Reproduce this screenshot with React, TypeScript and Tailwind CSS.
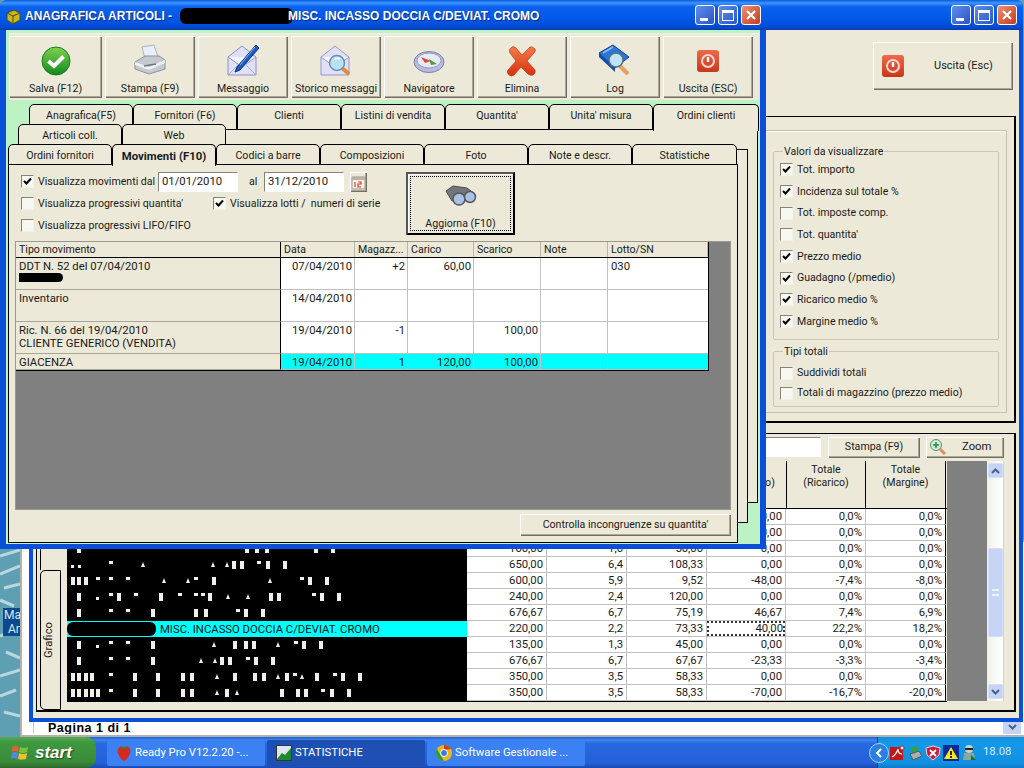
import React from "react";

const raised =
  "bg-[#ece9d8] shadow-[inset_1px_1px_0_#ffffff,inset_-1px_-1px_0_#716f64,inset_-2px_-2px_0_#aca899]";
const titleGradient =
  "bg-[linear-gradient(180deg,#0a5ce0_0%,#3f95ff_10%,#0a62ee_22%,#0055e5_70%,#0349cf_92%,#0a3aa8_100%)]";

const Check = ({ checked = false }: { checked?: boolean }) => (
  <span className="flex h-[13px] w-[13px] shrink-0 items-center justify-center border border-b-[#f4f3ea] border-l-[#85847a] border-r-[#f4f3ea] border-t-[#85847a] bg-[#f8f8f2]">
    {checked && (
      <svg width="9" height="9" viewBox="0 0 9 9">
        <path d="M1 4 L3.5 6.5 L8 1.5" fill="none" stroke="#000" strokeWidth="2" />
      </svg>
    )}
  </span>
);

const CheckRow = ({ label, checked, className }: { label: string; checked?: boolean; className?: string }) => (
  <div className={`flex items-center gap-[4px] ${className || ""}`}>
    <Check checked={checked} />
    <span className="whitespace-pre">{label}</span>
  </div>
);

const WinButtons = () => (
  <div className="flex items-center gap-[3px]">
    <span className="flex h-[20px] w-[20px] items-end rounded-[3px] border border-white bg-[linear-gradient(135deg,#5f8dea,#2a56c8)] pb-[3px] pl-[4px]">
      <span className="h-[3px] w-[8px] bg-white" />
    </span>
    <span className="flex h-[20px] w-[20px] items-center justify-center rounded-[3px] border border-white bg-[linear-gradient(135deg,#5f8dea,#2a56c8)]">
      <span className="h-[11px] w-[12px] border border-t-[3px] border-white" />
    </span>
    <span className="flex h-[20px] w-[20px] items-center justify-center rounded-[3px] border border-white bg-[linear-gradient(135deg,#ea9277,#c8391a)]">
      <svg width="12" height="12" viewBox="0 0 12 12">
        <path d="M2 2 L10 10 M10 2 L2 10" stroke="#fff" strokeWidth="2.2" />
      </svg>
    </span>
  </div>
);

const IconSave = () => (
  <svg width="36" height="36" viewBox="0 0 36 36">
    <defs>
      <linearGradient id="sv" x1="0" y1="0" x2="0" y2="1">
        <stop offset="0" stopColor="#7fd24f" />
        <stop offset="1" stopColor="#0f8a1e" />
      </linearGradient>
    </defs>
    <circle cx="18" cy="18" r="14" fill="url(#sv)" stroke="#1b7a22" />
    <path d="M10.5 18 L16 23 L25.5 13.5" fill="none" stroke="#fff" strokeWidth="4" />
  </svg>
);

const IconPrint = () => (
  <svg width="36" height="36" viewBox="0 0 36 36">
    <path d="M10 4 L22 2 L26 14 L13 16 Z" fill="#e8f1fa" stroke="#a8b4c2" />
    <path d="M3 19 L13 13 L27 13 L33 17 L33 26 L17 31 L3 26 Z" fill="#c6c9cf" stroke="#8d9199" />
    <path d="M3 19 L17 24 L33 17 L33 20 L17 27 L3 22 Z" fill="#eef0f3" />
    <path d="M12 23 L24 21" stroke="#72767d" strokeWidth="1.5" />
  </svg>
);

const IconMail = () => (
  <svg width="36" height="36" viewBox="0 0 36 36">
    <path d="M3 14 L17 3 L31 14 L31 32 L3 32 Z" fill="#dfe0f7" stroke="#8f8fc8" />
    <path d="M3 14 L17 24 L31 14" fill="#f7f7ff" stroke="#8f8fc8" />
    <path d="M3 32 L14 21 M31 32 L20 21" stroke="#a9a9d8" />
    <path d="M31 2 L34 5 L15 27 L10 29 L12 24 Z" fill="#1c5bc2" stroke="#0f2f78" />
    <path d="M30 4 L15 22" stroke="#8ab7f5" />
  </svg>
);

const IconMailSearch = () => (
  <svg width="36" height="36" viewBox="0 0 36 36">
    <path d="M3 14 L17 3 L31 14 L31 32 L3 32 Z" fill="#dfe0f7" stroke="#9797cc" />
    <path d="M3 14 L17 24 L31 14" fill="#f7f7ff" stroke="#9797cc" />
    <path d="M24 25 L31 31" stroke="#e58a3c" strokeWidth="4" />
    <circle cx="19" cy="20" r="7.5" fill="#b6e2f7" stroke="#6f8da8" strokeWidth="1.5" />
    <path d="M15 18 Q18 14 22 16" stroke="#fff" strokeWidth="1.5" fill="none" />
  </svg>
);

const IconNav = () => (
  <svg width="36" height="36" viewBox="0 0 36 36">
    <ellipse cx="18" cy="19" rx="15" ry="10.5" fill="#b8bce0" stroke="#7d80a8" />
    <ellipse cx="18" cy="17.5" rx="12" ry="7.5" fill="#eaeaf2" stroke="#9497b8" />
    <path d="M10 14 L20 18 L14 20 Z" fill="#d84c3c" />
    <path d="M26 21 L18 16 L20 22 Z" fill="#4c9a4c" />
  </svg>
);

const IconDelete = () => (
  <svg width="36" height="36" viewBox="0 0 36 36">
    <defs>
      <linearGradient id="dl" x1="0" y1="0" x2="0" y2="1">
        <stop offset="0" stopColor="#f47a4a" />
        <stop offset="1" stopColor="#d8300e" />
      </linearGradient>
    </defs>
    <path
      d="M8 4 Q10 3 12 5 L18 12 L26 4 Q28 3 31 6 Q32 8 30 10 L23 18 L31 27 Q32 30 29 32 Q26 33 24 31 L17 24 L10 32 Q7 34 5 32 Q2 29 4 27 L12 18 L6 10 Q4 6 8 4 Z"
      fill="url(#dl)"
      stroke="#b23a1a"
      strokeWidth="0.7"
    />
  </svg>
);

const IconLog = () => (
  <svg width="36" height="36" viewBox="0 0 36 36">
    <path d="M2 10 L16 2 L32 14 L18 25 Z" fill="#2a76d8" stroke="#0f3f8c" />
    <path d="M2 10 L18 25 L18 29 L2 14 Z" fill="#0f4fa8" />
    <path d="M6 10 L16 4" stroke="#8cc0f5" strokeWidth="1.5" />
    <path d="M23 23 L31 31" stroke="#e8a060" strokeWidth="4" />
    <circle cx="19" cy="17" r="7" fill="#bfe4f7" stroke="#5d6f80" strokeWidth="1.5" />
  </svg>
);

const IconPower = ({ size = 24 }: { size?: number }) => (
  <svg width={size} height={size} viewBox="0 0 24 24">
    <defs>
      <linearGradient id={`pw${size}`} x1="0" y1="0" x2="0" y2="1">
        <stop offset="0" stopColor="#ee6a4a" />
        <stop offset="1" stopColor="#c8361c" />
      </linearGradient>
    </defs>
    <rect x="1" y="1" width="22" height="22" rx="3" fill={`url(#pw${size})`} />
    <circle cx="12" cy="12" r="6" fill="none" stroke="#f8d8d0" strokeWidth="2" />
    <path d="M12 8 L12 13" stroke="#fff" strokeWidth="2.4" />
  </svg>
);

const IconBinoculars = () => (
  <svg width="32" height="22" viewBox="0 0 32 22">
    <path d="M1 6 L8 1 L22 3 L30 9 L24 16 L12 13 L7 16 Z" fill="#74757a" stroke="#4c4d52" />
    <circle cx="14" cy="14" r="6" fill="#a8c4e4" stroke="#55565a" strokeWidth="1.5" />
    <circle cx="25" cy="12" r="5.5" fill="#a8c4e4" stroke="#55565a" strokeWidth="1.5" />
  </svg>
);

const IconCalendar = () => (
  <svg width="15" height="15" viewBox="0 0 15 15">
    <rect x="1" y="2" width="13" height="12" fill="#f8f4ec" stroke="#9a9488" />
    <rect x="1" y="2" width="13" height="3" fill="#b8b0a4" />
    <path d="M4 7 L4 12 M7 7 L10 7 L10 9 L7 9 L7 12 L10 12" stroke="#d83c20" fill="none" strokeWidth="1.2" />
  </svg>
);

const IconZoom = () => (
  <svg width="18" height="18" viewBox="0 0 18 18">
    <path d="M11 11 L16 16" stroke="#e0905a" strokeWidth="3" />
    <circle cx="7" cy="7" r="5.5" fill="#c8ecd8" stroke="#6a8a78" />
    <path d="M7 4 L7 10 M4 7 L10 7" stroke="#2a8a3c" strokeWidth="1.5" />
  </svg>
);

const Arrow = ({ up }: { up?: boolean }) => (
  <svg width="9" height="6" viewBox="0 0 9 6">
    <path d={up ? "M1 5 L4.5 1.5 L8 5" : "M1 1 L4.5 4.5 L8 1"} fill="none" stroke="#4d6185" strokeWidth="2" />
  </svg>
);

const ScrollBtn = ({ up }: { up?: boolean }) => (
  <div className="flex h-[15px] w-[15px] items-center justify-center rounded-[2px] border border-[#d4def6] bg-[#c4d4f6]">
    <Arrow up={up} />
  </div>
);

const toolbar = [
  { label: "Salva (F12)", icon: <IconSave />, w: "w-[93px]" },
  { label: "Stampa (F9)", icon: <IconPrint />, w: "w-[90px]" },
  { label: "Messaggio", icon: <IconMail />, w: "w-[90px]" },
  { label: "Storico messaggi", icon: <IconMailSearch />, w: "w-[90px]" },
  { label: "Navigatore", icon: <IconNav />, w: "w-[90px]" },
  { label: "Elimina", icon: <IconDelete />, w: "w-[90px]" },
  { label: "Log", icon: <IconLog />, w: "w-[90px]" },
  { label: "Uscita (ESC)", icon: <IconPower />, w: "w-[90px]" },
];

const Tab = ({ label, active, bold, w = "w-[104px]" }: { label: string; active?: boolean; bold?: boolean; w?: string }) => (
  <div
    className={`${w} relative shrink-0 rounded-t-[5px] border border-black pt-[3px] text-center ${
      active ? "z-10 -mb-px border-b-0 bg-[#ece9d8]" : "bg-[#ece9d8]"
    } ${bold ? "text-[11.4px] font-bold" : ""}`}
  >
    {label}
  </div>
);

const moveCols = "grid grid-cols-[265px_74px_53px_66px_67px_67px_100px]";

const moves = [
  { h: "h-[32px]", tipo: ["DDT N. 52 del 07/04/2010"], scribble: true, data: "07/04/2010", mag: "+2", car: "60,00", sca: "", lot: "030" },
  { h: "h-[32px]", tipo: ["Inventario"], data: "14/04/2010", mag: "", car: "", sca: "", lot: "" },
  { h: "h-[32px]", tipo: ["Ric. N. 66 del 19/04/2010", "CLIENTE GENERICO (VENDITA)"], data: "19/04/2010", mag: "-1", car: "", sca: "100,00", lot: "" },
  { h: "h-[16px]", tipo: ["GIACENZA"], data: "19/04/2010", mag: "1", car: "120,00", sca: "100,00", lot: "", cyan: true },
];

const MoveTable = () => (
  <div className="h-[269px] w-[716px] border border-[#9a988c] bg-[#808080]">
    <div className="w-[693px] border-b border-r border-black">
      <div className={`${moveCols} h-[16px] border-b border-black bg-[#ece9d8] leading-[15px]`}>
        {["Tipo movimento", "Data", "Magazz...", "Carico", "Scarico", "Note", "Lotto/SN"].map((t, i) => (
          <div key={t} className={`pl-[3px] ${i === 0 ? "border-r border-black" : "border-r border-[#b8b6aa]"}`}>
            {t}
          </div>
        ))}
      </div>
      {moves.map((m, i) => {
        const bg = m.cyan ? "bg-[#00ffff]" : "bg-white";
        const cell = `${bg} border-r border-b border-[#c0c0c0] pr-[2px] text-right`;
        return (
          <div key={i} className={`${moveCols} ${m.h} text-[11.3px] leading-[13px]`}>
            <div className="relative border-b border-r border-b-[#a8a69a] border-r-black bg-[#ece9d8] pl-[3px] pt-[2px]">
              {m.tipo.map((t) => (
                <div key={t}>{t}</div>
              ))}
              {m.scribble && <div className="h-[9px] w-[44px] rounded-r-full bg-black" />}
            </div>
            <div className={`${cell} pt-[2px]`}>{m.data}</div>
            <div className={`${cell} pt-[2px]`}>{m.mag}</div>
            <div className={`${cell} pt-[2px]`}>{m.car}</div>
            <div className={`${cell} pt-[2px]`}>{m.sca}</div>
            <div className={cell} />
            <div className={`${bg} border-b border-[#c0c0c0] pl-[3px] pt-[2px]`}>{m.lot}</div>
          </div>
        );
      })}
    </div>
  </div>
);

const FrontWindow = () => (
  <div className="absolute left-0 top-0 flex h-[549px] w-[766px] flex-col rounded-t-[7px] bg-[#0a4fd8]">
    <div className={`flex h-[30px] shrink-0 items-center justify-between rounded-t-[7px] pl-[5px] pr-[5px] ${titleGradient}`}>
      <div className="flex items-center gap-[3px] pt-[2px] text-[12px] font-bold text-white [font-family:'Liberation_Sans',Arial,sans-serif] [text-shadow:1px_1px_0_#0a2a80]">
        <svg width="17" height="17" viewBox="0 0 17 17">
          <path d="M2 5 L9 2 L15 5 L15 12 L8 16 L2 12 Z" fill="#c8b818" stroke="#4a4a20" />
          <path d="M2 5 L8 8 L15 5 M8 8 L8 16" stroke="#4a4a20" fill="none" />
        </svg>
        <span>ANAGRAFICA ARTICOLI - </span>
        <span className="-mr-[8px] ml-[5px] h-[16px] w-[113px] rounded-[6px] bg-black" />
        <span>MISC. INCASSO DOCCIA C/DEVIAT. CROMO</span>
      </div>
      <WinButtons />
    </div>
    <div className="mx-[6px] mb-[5px] flex-1 bg-[#bcf2c4] pt-[3px]">
      <div className="ml-[3px] flex h-[67px] w-[750px] gap-[3px] border-t border-[#f4f3ea] bg-[#ece9d8] pt-[2px]">
        {toolbar.map((b) => (
          <div key={b.label} className={`${raised} ${b.w} flex h-[62px] flex-col items-center justify-between pb-[3px] pt-[6px]`}>
            <div className="flex h-[38px] items-center">{b.icon}</div>
            <div className="whitespace-nowrap leading-[13px]">{b.label}</div>
          </div>
        ))}
      </div>
      <div className="ml-[2px] mt-[4px] grid">
        <div className="col-start-1 row-start-1 ml-[21px] w-[729px]">
          <div className="flex h-[26px]">
            {["Anagrafica(F5)", "Fornitori (F6)", "Clienti", "Listini di vendita", "Quantita'", "Unita' misura"].map((t) => (
              <Tab key={t} label={t} />
            ))}
            <Tab label="Ordini clienti" active w="w-[106px]" />
          </div>
          <div className="-mt-px h-[374px] border border-l-0 border-black bg-[#ece9d8]" />
        </div>
        <div className="col-start-1 row-start-1 ml-[10px] mt-[20px] w-[730px]">
          <div className="flex h-[26px]">
            <Tab label="Articoli coll." />
            <Tab label="Web" />
          </div>
          <div className="-mt-px h-[374px] border border-l-0 border-black bg-[#ece9d8]" />
        </div>
        <div className="col-start-1 row-start-1 mt-[40px] w-[730px]">
          <div className="flex h-[21px]">
            <Tab label="Ordini fornitori" />
            <Tab label="Movimenti (F10)" bold active />
            <Tab label="Codici a barre" />
            <Tab label="Composizioni" />
            <Tab label="Foto" />
            <Tab label="Note e descr." />
            <Tab label="Statistiche" w="w-[105px]" />
          </div>
          <div className="-mt-px flex h-[379px] flex-col border border-black bg-[#ece9d8] pl-[6px] pt-[7px]">
            <div className="flex h-[69px]">
              <div className="w-[391px] pl-[6px]">
                <div className="flex h-[20px] items-center">
                  <CheckRow label="Visualizza movimenti dal" checked className="w-[137px]" />
                  <span className="flex h-[20px] w-[80px] items-center border border-b-white border-l-[#85847a] border-r-white border-t-[#85847a] bg-white pl-[3px] text-[11.3px]">01/01/2010</span>
                  <span className="w-[26px] pl-[11px]">al</span>
                  <span className="flex h-[20px] w-[80px] items-center border border-b-white border-l-[#85847a] border-r-white border-t-[#85847a] bg-white pl-[3px] text-[11.3px]">31/12/2010</span>
                  <span className={`${raised} ml-[6px] flex h-[20px] w-[17px] items-center justify-center`}>
                    <IconCalendar />
                  </span>
                </div>
                <div className="mt-[1px] flex h-[22px] items-center">
                  <CheckRow label="Visualizza progressivi quantita'" className="w-[192px]" />
                  <CheckRow label="Visualizza lotti /  numeri di serie" checked className="whitespace-nowrap" />
                </div>
                <div className="flex h-[22px] items-center">
                  <CheckRow label="Visualizza progressivi LIFO/FIFO" />
                </div>
              </div>
              <div className="flex h-[63px] w-[109px] flex-col items-center justify-between border-2 border-black border-l-[#555] border-t-[#555] bg-[#ece9d8] p-[2px] shadow-[inset_1px_1px_0_#fff]">
                <div className="flex h-full w-full flex-col items-center justify-between border border-dotted border-black pt-[8px]">
                  <IconBinoculars />
                  <span className="leading-[12px]">Aggiorna (F10)</span>
                </div>
              </div>
            </div>
            <MoveTable />
            <div className={`${raised} ml-[505px] mt-[4px] flex h-[22px] w-[211px] items-center justify-center`}>
              Controlla incongruenze su quantita'
            </div>
          </div>
        </div>
      </div>
    </div>
  </div>
);

const statRows = [
  ["", "", "", "0,00", "0,0%", "0,0%"],
  ["", "", "", "0,00", "0,0%", "0,0%"],
  ["100,00", "1,0", "50,00", "0,00", "0,0%", "0,0%"],
  ["650,00", "6,4", "108,33", "0,00", "0,0%", "0,0%"],
  ["600,00", "5,9", "9,52", "-48,00", "-7,4%", "-8,0%"],
  ["240,00", "2,4", "120,00", "0,00", "0,0%", "0,0%"],
  ["676,67", "6,7", "75,19", "46,67", "7,4%", "6,9%"],
  ["220,00", "2,2", "73,33", "40,00", "22,2%", "18,2%"],
  ["135,00", "1,3", "45,00", "0,00", "0,0%", "0,0%"],
  ["676,67", "6,7", "67,67", "-23,33", "-3,3%", "-3,4%"],
  ["350,00", "3,5", "58,33", "0,00", "0,0%", "0,0%"],
  ["350,00", "3,5", "58,33", "-70,00", "-16,7%", "-20,0%"],
];

// redacted text: what is left of it, x is in the 3x zoom of the reference
const noise: Record<number, string> = {
  2: "b238 b740 b770 b800 b948 b1000",
  3: "l215 l237 t333 d430 d640 d682 b703 b725 t778 b805 b855",
  4: "b220 b238 b257 t293 t333 t385 d493 d565 t588 b642 d810 t905 b930 b982",
  5: "b238 l292 t333 b357 t407 b483 t540 t588 t610 b630 d683 d745 b812 b838 t942 b966 b1017",
  6: "b238 t333 t385 b458 b587 b617 t713 b738 b790",
  8: "b238 l291 t333 t385 b458 d641 b705 b737 b762 d835 t888 b912 b963",
  9: "b238 t333 t385 b458 d604 d645 b665 b690 t743 b767 b820",
  10: "b220 b238 b258 b275 t333 b405 b473 b550 b577 d650 b705 d835 b765 b792 b860 t885 d907 b950 t1005 b1030 b1080",
  11: "b220 b238 b258 b275 b293 t333 b405 b473 b550 b577 d650 b680 d712 b845 b893 b918 t970 b995 b1047",
};

const Noise = ({ row }: { row: number }) => (
  <svg width="400" height="16" viewBox="0 0 400 16" className="block">
    {(noise[row] || "").split(" ").filter(Boolean).map((n, i) => {
      const x = Math.round(Number(n.slice(1)) / 3) - 67;
      const k = n[0];
      if (k === "b") return <rect key={i} x={x - 2} y={4} width={4} height={8} fill="#f0f0e8" />;
      if (k === "t") return <rect key={i} x={x - 2} y={4} width={4} height={3} fill="#f0f0e8" />;
      if (k === "l") return <rect key={i} x={x - 1} y={8} width={3} height={3} fill="#f0f0e8" />;
      return <path key={i} d={`M${x} 5 L${x + 2} 10 L${x - 2} 10 Z`} fill="#f0f0e8" />;
    })}
  </svg>
);

const StatsGrid = () => (
  <div className="flex h-[239px] w-[938px]">
    <div className="w-[880px]">
      <div className="flex h-[48px] w-[880px] border-b border-black bg-[#ece9d8] leading-[13px]">
        <div className="w-[640px]" />
        <div className="w-[79px] overflow-hidden border-l border-black pt-[2px] text-center">
          Totale
          <br />
          (Guadagno)
        </div>
        <div className="w-[80px] border-l border-r border-black pt-[2px] text-center">
          Totale
          <br />
          (Ricarico)
        </div>
        <div className="w-[80px] border-r border-black pt-[2px] text-center">
          Totale
          <br />
          (Margine)
        </div>
      </div>
      {statRows.map((r, i) => (
        <div key={i} className="flex h-[16px] w-[880px] text-[11.3px] leading-[15px]">
          {i === 7 ? (
            <div className="flex h-[16px] w-[400px] items-center bg-[#00ffff] text-[#111]">
              <span className="h-[14px] w-[89px] rounded-[6px] bg-black" />
              <span className="ml-[4px]">MISC. INCASSO DOCCIA C/DEVIAT. CROMO</span>
            </div>
          ) : (
            <div className="h-[16px] w-[400px] bg-black">
              <Noise row={i} />
            </div>
          )}
          {r.map((c, j) => (
            <div
              key={j}
              className={`h-[16px] border-b border-r border-[#c0c0c0] bg-white pr-[3px] text-right ${
                j === 3 ? "w-[79px]" : "w-[80px]"
              } ${j === 5 ? "border-r-black" : ""}`}
            >
              {i === 7 && j === 3 ? (
                <span className="-mr-[3px] block h-full pr-[2px] outline-2 -outline-offset-2 outline-[#333] outline-dotted">{c}</span>
              ) : (
                c
              )}
            </div>
          ))}
        </div>
      ))}
      <div className="h-px w-[880px] bg-black" />
    </div>
    <div className="h-[240px] w-[40px] shrink-0 bg-[#808080]" />
    <div className="relative flex h-[240px] w-[17px] shrink-0 flex-col items-center justify-between border-r border-[#d4d2c4] bg-[linear-gradient(90deg,#f0f0ea,#ffffff)] py-[2px]">
      <ScrollBtn up />
      <div className="absolute left-[1px] top-[87px] flex h-[89px] w-[15px] items-center justify-center rounded-[2px] border border-[#d4def6] bg-[#c6d4f6]">
        <span className="h-[7px] w-[7px] border-y-2 border-[#eef2fc]" />
      </div>
      <ScrollBtn />
    </div>
  </div>
);

const GroupBox = ({ title, className, children }: { title: string; className?: string; children: React.ReactNode }) => (
  <fieldset className={`w-[226px] rounded-[2px] border border-[#c9c7b4] pl-[6px] ${className || ""}`}>
    <legend className="ml-[3px] px-[1px] leading-[13px]">{title}</legend>
    {children}
  </fieldset>
);

const StatsWindow = () => (
  <div className="absolute left-[29px] top-0 flex h-[722px] w-[994px] flex-col rounded-t-[7px] bg-[#0a4fd8]">
    <div className={`flex h-[30px] shrink-0 items-center justify-end rounded-t-[7px] pr-[6px] ${titleGradient}`}>
      <WinButtons />
    </div>
    <div className="mx-[4px] mb-[4px] flex flex-1 flex-col items-end bg-[#ece9d8] pt-[12px]">
      <div className={`${raised} mr-[6px] flex h-[48px] w-[140px] shrink-0 items-center pl-[8px]`}>
        <IconPower size={24} />
        <span className="ml-[29px] text-[11px]">Uscita (Esc)</span>
      </div>
      <div className="mr-[3px] mt-[26px] h-[307px] w-[980px] shrink-0 border border-b-2 border-r-2 border-black pt-[13px]">
        <div className="ml-[3px] mr-[7px] flex h-[283px] flex-col items-end border border-[#c4c2ae] pr-[7px] pt-[14px] shadow-[inset_1px_1px_0_#fff]">
          <GroupBox title="Valori da visualizzare" className="h-[195px] pt-[1px]">
            {[
              ["Tot. importo", true],
              ["Incidenza sul totale %", true],
              ["Tot. imposte comp.", false],
              ["Tot. quantita'", false],
              ["Prezzo medio", true],
              ["Guadagno (/pmedio)", true],
              ["Ricarico medio %", true],
              ["Margine medio %", true],
            ].map(([t, c]) => (
              <CheckRow key={String(t)} label={String(t)} checked={Boolean(c)} className="h-[21.7px]" />
            ))}
          </GroupBox>
          <GroupBox title="Tipi totali" className="mt-[5px] h-[62px]">
            <CheckRow label="Suddividi totali" checked={false} className="mt-[5px] h-[20px]" />
            <CheckRow label="Totali di magazzino (prezzo medio)" className="h-[20px]" />
          </GroupBox>
        </div>
      </div>
      <div className="mr-[3px] mt-[10px] flex h-[279px] w-[980px] shrink-0 flex-col items-end border border-b-2 border-r-2 border-black">
        <div className="mr-[10px] mt-[2px] flex h-[22px] shrink-0 items-center">
          <span className="flex h-[20px] w-[400px] border border-b-white border-l-[#85847a] border-r-white border-t-[#85847a] bg-white" />
          <div className={`${raised} ml-[7px] flex h-[21px] w-[92px] items-center justify-center`}>Stampa (F9)</div>
          <div className={`${raised} ml-[6px] flex h-[21px] w-[78px] items-center pl-[3px]`}>
            <IconZoom />
            <span className="ml-[15px] text-[11.3px]">Zoom</span>
          </div>
        </div>
        <div className="mt-[3px] flex w-full flex-1 pl-[3px]">
          <div className="flex w-[21px] shrink-0 flex-col">
            <div className="flex-1 border-l border-black" />
            <div className="flex h-[140px] items-center justify-center rounded-l-[5px] border border-black bg-[#ece9d8] pr-[2px] text-[11.3px]">
              <span className="rotate-180 [writing-mode:vertical-rl]">Grafico</span>
            </div>
          </div>
          <div className="ml-[6px] flex">
            <StatsGrid />
          </div>
        </div>
      </div>
    </div>
  </div>
);

const tasks = [
  {
    label: "Ready Pro V12.2.20 -...",
    active: false,
    icon: (
      <svg width="16" height="18" viewBox="0 0 16 18">
        <path d="M8 3 C13 1 15 5 14 9 C13 13 10 16 8 17 C6 16 3 13 2 9 C1 5 3 1 8 3 Z" fill="#d8281c" />
        <path d="M4 2 L8 4 L12 2 L10 5 L6 5 Z" fill="#2a8a2a" />
      </svg>
    ),
  },
  {
    label: "STATISTICHE",
    active: true,
    icon: (
      <svg width="16" height="16" viewBox="0 0 16 16">
        <rect x="0.5" y="0.5" width="15" height="15" fill="#dfe6f0" stroke="#333" />
        <path d="M1 14 L6 8 L9 10 L15 3 L15 15 L1 15 Z" fill="#1c8a2c" />
      </svg>
    ),
  },
  {
    label: "Software Gestionale ...",
    active: false,
    icon: (
      <svg width="16" height="16" viewBox="0 0 16 16">
        <circle cx="8" cy="8" r="8" fill="#e8b818" />
        <path d="M8 0 A8 8 0 0 1 15 4 L8 5 Z" fill="#d83a28" />
        <path d="M1 4 L5 11 L8 16 A8 8 0 0 1 1 4 Z" fill="#2a9a3c" />
        <circle cx="8" cy="8" r="3.5" fill="#3a78d8" stroke="#fff" />
      </svg>
    ),
  },
];

const Taskbar = () => (
  <div className="absolute bottom-0 left-0 flex h-[31px] w-[1024px] items-center bg-[linear-gradient(180deg,#1f5fd8_0%,#3a88f0_10%,#2868e0_20%,#2460d8_85%,#1a48b0_100%)] text-[11.3px] text-white">
    <div className="flex h-full w-[96px] shrink-0 items-center rounded-r-[10px] bg-[linear-gradient(180deg,#5aa85a_0%,#3f9a3f_15%,#3a8a3a_80%,#2a6a2a_100%)] pl-[11px]">
      <svg width="18" height="18" viewBox="0 0 18 18">
        <path d="M1 3 Q4 1 8 3 L7 8 Q4 6 1 8 Z" fill="#e0603a" />
        <path d="M9 3 Q13 5 17 3 L16 8 Q12 10 8 8 Z" fill="#7cc040" />
        <path d="M1 9 Q4 7 7 9 L6 15 Q3 13 0 15 Z" fill="#4a8ae0" />
        <path d="M8 9 Q12 11 16 9 L15 15 Q11 16 7 15 Z" fill="#f0c030" />
      </svg>
      <span className="ml-[6px] text-[17px] font-bold italic leading-none [font-family:'Liberation_Sans',Arial,sans-serif] [text-shadow:1px_1px_1px_#1a4a1a]">start</span>
    </div>
    <div className="ml-[11px] flex gap-[2px]">
      {tasks.map((t) => (
        <div
          key={t.label}
          className={`flex h-[26px] w-[158px] items-center gap-[3px] rounded-[2px] pl-[9px] ${
            t.active ? "bg-[#1e50b4]" : "bg-[#3c81f3]"
          }`}
        >
          {t.icon}
          <span className="whitespace-nowrap pt-[2px]">{t.label}</span>
        </div>
      ))}
    </div>
    <div className="relative ml-auto flex h-full w-[147px] items-center border-l border-[#0f3c9c] bg-[linear-gradient(180deg,#1090e8,#1498e8_20%,#1290e0_85%,#0f78c8)] pl-[11px]">
      <span className="absolute left-[-9px] flex h-[20px] w-[20px] items-center justify-center rounded-full border border-[#a8d4f8] bg-[#2a80e0]">
        <svg width="8" height="10" viewBox="0 0 8 10">
          <path d="M6 1 L2 5 L6 9" fill="none" stroke="#fff" strokeWidth="2" />
        </svg>
      </span>
      <div className="flex items-center gap-[2px]">
        <svg width="16" height="16" viewBox="0 0 16 16">
          <rect x="1" y="2" width="13" height="13" fill="#c01818" />
          <path d="M3 12 Q7 10 9 4 Q9 9 13 9" fill="none" stroke="#fff" strokeWidth="1.2" />
          <circle cx="13" cy="3" r="2" fill="#fff" stroke="#c01818" />
        </svg>
        <svg width="16" height="16" viewBox="0 0 16 16">
          <path d="M3 9 L12 6 L15 11 L6 15 Z" fill="#a8b0a8" stroke="#555" />
          <path d="M3 3 L10 1 L11 6 L6 7 Z" fill="#38a038" />
        </svg>
        <svg width="16" height="16" viewBox="0 0 16 16">
          <path d="M8 1 L15 3 L14 10 L8 15 L2 10 L1 3 Z" fill="#c81c3c" stroke="#f0d0d0" />
          <path d="M5 5 L11 11 M11 5 L5 11" stroke="#fff" strokeWidth="1.8" />
        </svg>
        <svg width="16" height="16" viewBox="0 0 16 16">
          <rect width="16" height="16" fill="#0a2a9a" />
          <path d="M8 2 L15 14 L1 14 Z" fill="#f8e818" />
          <path d="M8 6 L8 10 M8 11 L8 13" stroke="#000" strokeWidth="1.6" />
        </svg>
        <svg width="16" height="17" viewBox="0 0 16 17">
          <circle cx="8" cy="5" r="4" fill="#c8d0c8" />
          <rect x="4" y="4" width="8" height="2" fill="#222" />
          <path d="M2 16 L3 9 L13 9 L14 16 Z" fill="#8aa89a" />
          <path d="M10 11 L15 16 L10 16 Z" fill="#1a6a3a" />
        </svg>
      </div>
      <span className="ml-[6px] text-[#d8ecfc]">18.08</span>
    </div>
  </div>
);

const App = () => (
  <div className="relative h-[768px] w-[1024px] overflow-hidden bg-[#5f9fb4] text-[10.6px] text-[#1a1a1a] [font-family:Roboto,Arial,sans-serif]">
    <svg width="20" height="200" viewBox="0 0 20 200" className="absolute left-0 top-[540px]">
      <path d="M0 16 L20 10 M0 34 L20 26 M4 48 L20 44 M0 60 L14 66 M0 96 L20 88 M6 112 L20 118 M0 136 L20 130 M0 156 L16 150 M4 172 L20 176" fill="none" stroke="#cfe5ea" strokeWidth="3" opacity="0.8" />
    </svg>
    <div className="absolute left-[3px] top-[608px] h-[28px] w-[34px] bg-[#0b4a8c] pl-[1px] text-[12px] leading-[14px] text-[#d8e8f4]">
      Mal
      <br />
      <span className="pl-[4px]">An</span>
    </div>
    <div className="absolute left-[20px] top-[540px] h-[197px] w-[1004px] border-l-2 border-t-2 border-[#b4b2a6] bg-white">
      <div className="absolute bottom-[4px] left-[11px] h-[15px] w-px bg-[#d8b8b8]" />
      <div className="absolute bottom-[3px] left-[26px] h-[13px] overflow-hidden text-[12.5px] font-bold leading-[15px] tracking-[0.5px] text-black [font-family:'Liberation_Sans',Arial,sans-serif]">
        Pagina 1 di 1
      </div>
      <div className="absolute bottom-[3px] right-[3px] flex h-[14px] w-[18px] items-center justify-center bg-[#c4d4f6]">
        <Arrow />
      </div>
      <div className="absolute bottom-0 left-0 right-0 h-[2px] bg-[#b4b2a6]" />
    </div>
    <StatsWindow />
    <FrontWindow />
    <Taskbar />
  </div>
);

export default App;
